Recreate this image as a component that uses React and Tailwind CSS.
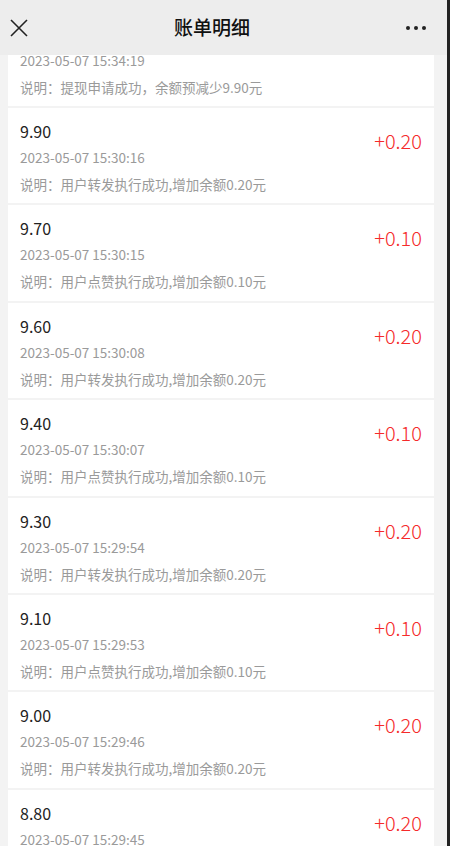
import React from 'react';

const rows = [
  { value: '', time: '2023-05-07 15:34:19', note: '说明：提现申请成功，余额预减少9.90元', amount: '' },
  { value: '9.90', time: '2023-05-07 15:30:16', note: '说明：用户转发执行成功,增加余额0.20元', amount: '+0.20' },
  { value: '9.70', time: '2023-05-07 15:30:15', note: '说明：用户点赞执行成功,增加余额0.10元', amount: '+0.10' },
  { value: '9.60', time: '2023-05-07 15:30:08', note: '说明：用户转发执行成功,增加余额0.20元', amount: '+0.20' },
  { value: '9.40', time: '2023-05-07 15:30:07', note: '说明：用户点赞执行成功,增加余额0.10元', amount: '+0.10' },
  { value: '9.30', time: '2023-05-07 15:29:54', note: '说明：用户转发执行成功,增加余额0.20元', amount: '+0.20' },
  { value: '9.10', time: '2023-05-07 15:29:53', note: '说明：用户点赞执行成功,增加余额0.10元', amount: '+0.10' },
  { value: '9.00', time: '2023-05-07 15:29:46', note: '说明：用户转发执行成功,增加余额0.20元', amount: '+0.20' },
  { value: '8.80', time: '2023-05-07 15:29:45', note: '说明：用户转发执行成功,增加余额0.20元', amount: '+0.20' },
];

function Row({ item }) {
  return (
    <div className="flex justify-between bg-white h-[95.4px] pl-3 pr-3">
      <div className="flex flex-col pt-[10px]">
        <div className="text-[16px] leading-[26px] h-[26px] text-[#222]">{item.value}</div>
        <div className="text-[13.5px] leading-[27px] text-[#9a9a9a]">{item.time}</div>
        <div className="text-[13.5px] leading-[26px] text-[#9a9a9a]">{item.note}</div>
      </div>
      <div className="text-[20px] leading-[28px] text-[#f52a2a] font-light pt-[19px]">{item.amount}</div>
    </div>
  );
}

export default function App() {
  return (
    <div
      className="w-[450px] h-[846px] overflow-hidden flex bg-[#f3f3f3]"
      style={{ fontFamily: '"Noto Sans CJK SC", "Noto Sans", sans-serif' }}
    >
      <div className="flex-1 flex flex-col min-w-0">
        <div className="h-[55px] shrink-0 bg-[#ededed] flex items-center pl-[10px] pr-[21px] relative z-10">
          <svg width="18" height="18" viewBox="0 0 18 18" className="mt-[1px] shrink-0">
            <path d="M1 1 L17 17 M17 1 L1 17" stroke="#222" strokeWidth="1.6" fill="none" />
          </svg>
          <div className="flex-1 text-center text-[19px] font-medium text-[#111] pr-[10px]">账单明细</div>
          <div className="flex gap-[4px] shrink-0">
            <span className="w-[4px] h-[4px] rounded-full bg-[#222]"></span>
            <span className="w-[4px] h-[4px] rounded-full bg-[#222]"></span>
            <span className="w-[4px] h-[4px] rounded-full bg-[#222]"></span>
          </div>
        </div>
        <div className="flex-1 overflow-hidden">
          <div className="-mt-[44.4px] pl-[8px] pr-[13px] flex flex-col gap-[2px]">
            {rows.map((r, i) => (
              <Row key={i} item={r} />
            ))}
          </div>
        </div>
      </div>
      <div className="w-[3px] bg-[#222]"></div>
    </div>
  );
}
